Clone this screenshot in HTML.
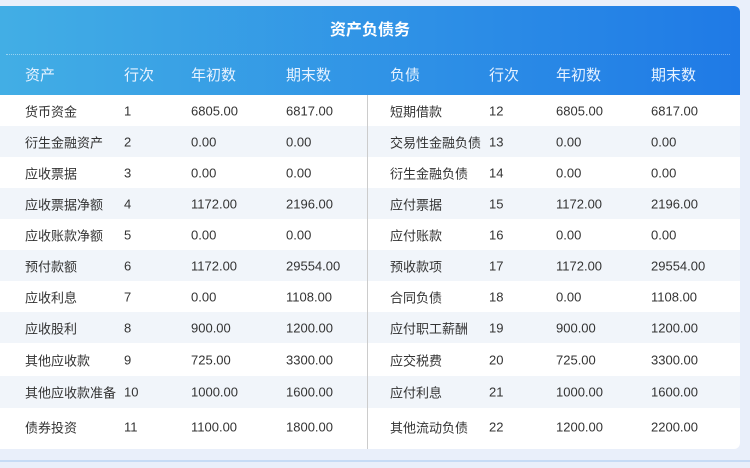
<!DOCTYPE html>
<html><head><meta charset="utf-8"><style>
body{margin:0;width:750px;height:468px;background:#e9effa;font-family:"Liberation Sans","Noto Sans CJK SC",sans-serif;position:relative;overflow:hidden}
.card{position:absolute;left:0;top:6px;width:740px;height:443px;background:#fff;border-radius:0 6px 6px 0;overflow:hidden}
.hd{height:89px;background:linear-gradient(90deg,#42aee5,#1f7ae6);position:relative;color:#fff}
.title{position:absolute;top:0;left:0;width:740px;text-align:center;line-height:50px;font-size:16px;font-weight:bold}
.dl{position:absolute;left:6px;right:10px;top:48px;border-top:1px dotted rgba(255,255,255,.45)}
.ch span{position:absolute;top:58px;font-size:15px;color:#e6f2ff}
.row{position:relative;height:31px;font-size:13px;color:#333}
.row.alt{background:#f1f5fa}
.row span{position:absolute;top:50%;transform:translateY(-50%)}
.vd{position:absolute;left:367px;top:89px;bottom:0;width:1px;background:#ccc}
.ft{position:absolute;left:0;right:0;top:460px;height:2px;background:#c6dbf5}
</style></head><body>
<div class="card">
<div class="hd"><div class="title">资产负债务</div><div class="dl"></div>
<div class="ch"><span style="left:25px">资产</span><span style="left:124px">行次</span><span style="left:191px">年初数</span><span style="left:286px">期末数</span><span style="left:390px">负债</span><span style="left:489px">行次</span><span style="left:556px">年初数</span><span style="left:651px">期末数</span></div></div>
<div id="rows"></div>
<div class="vd"></div>
</div>
<div class="ft"></div>
<div style="position:absolute;top:95px;left:0;width:740px">
<div class="row"><span style="left:25px">货币资金</span><span style="left:124px">1</span><span style="left:191px">6805.00</span><span style="left:286px">6817.00</span><span style="left:390px">短期借款</span><span style="left:489px">12</span><span style="left:556px">6805.00</span><span style="left:651px">6817.00</span></div>
<div class="row alt"><span style="left:25px">衍生金融资产</span><span style="left:124px">2</span><span style="left:191px">0.00</span><span style="left:286px">0.00</span><span style="left:390px">交易性金融负债</span><span style="left:489px">13</span><span style="left:556px">0.00</span><span style="left:651px">0.00</span></div>
<div class="row"><span style="left:25px">应收票据</span><span style="left:124px">3</span><span style="left:191px">0.00</span><span style="left:286px">0.00</span><span style="left:390px">衍生金融负债</span><span style="left:489px">14</span><span style="left:556px">0.00</span><span style="left:651px">0.00</span></div>
<div class="row alt"><span style="left:25px">应收票据净额</span><span style="left:124px">4</span><span style="left:191px">1172.00</span><span style="left:286px">2196.00</span><span style="left:390px">应付票据</span><span style="left:489px">15</span><span style="left:556px">1172.00</span><span style="left:651px">2196.00</span></div>
<div class="row"><span style="left:25px">应收账款净额</span><span style="left:124px">5</span><span style="left:191px">0.00</span><span style="left:286px">0.00</span><span style="left:390px">应付账款</span><span style="left:489px">16</span><span style="left:556px">0.00</span><span style="left:651px">0.00</span></div>
<div class="row alt"><span style="left:25px">预付款额</span><span style="left:124px">6</span><span style="left:191px">1172.00</span><span style="left:286px">29554.00</span><span style="left:390px">预收款项</span><span style="left:489px">17</span><span style="left:556px">1172.00</span><span style="left:651px">29554.00</span></div>
<div class="row"><span style="left:25px">应收利息</span><span style="left:124px">7</span><span style="left:191px">0.00</span><span style="left:286px">1108.00</span><span style="left:390px">合同负债</span><span style="left:489px">18</span><span style="left:556px">0.00</span><span style="left:651px">1108.00</span></div>
<div class="row alt"><span style="left:25px">应收股利</span><span style="left:124px">8</span><span style="left:191px">900.00</span><span style="left:286px">1200.00</span><span style="left:390px">应付职工薪酬</span><span style="left:489px">19</span><span style="left:556px">900.00</span><span style="left:651px">1200.00</span></div>
<div class="row" style="height:33px"><span style="left:25px">其他应收款</span><span style="left:124px">9</span><span style="left:191px">725.00</span><span style="left:286px">3300.00</span><span style="left:390px">应交税费</span><span style="left:489px">20</span><span style="left:556px">725.00</span><span style="left:651px">3300.00</span></div>
<div class="row alt" style="height:32px;margin-top:0"><span style="left:25px">其他应收款准备</span><span style="left:124px">10</span><span style="left:191px">1000.00</span><span style="left:286px">1600.00</span><span style="left:390px">应付利息</span><span style="left:489px">21</span><span style="left:556px">1000.00</span><span style="left:651px">1600.00</span></div>
<div class="row" style="height:37px"><span style="left:25px">债券投资</span><span style="left:124px">11</span><span style="left:191px">1100.00</span><span style="left:286px">1800.00</span><span style="left:390px">其他流动负债</span><span style="left:489px">22</span><span style="left:556px">1200.00</span><span style="left:651px">2200.00</span></div>
</div>
<div style="position:absolute;left:367px;top:95px;height:354px;width:1px;background:#ccc"></div>
</body></html>
